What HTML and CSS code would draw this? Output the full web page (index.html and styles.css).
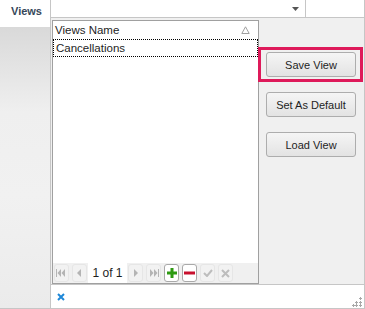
FILE: index.html
```html
<!DOCTYPE html>
<html lang="en">
<head>
  <meta charset="UTF-8">
  <title>Views</title>
  <link rel="stylesheet" href="styles.css">
</head>
<body>
  <div class="frame">
    <!-- Left caption column -->
    <div class="side">
      <div class="side-label">Views</div>
      <div class="side-fill"></div>
    </div>

    <div class="content">
      <!-- Combo row -->
      <div class="top-row">
        <div class="combo">
          <svg class="combo-arrow" width="7" height="4" viewBox="0 0 7 4"><path d="M0 0H7L3.5 4Z" fill="#555"/></svg>
        </div>
        <div class="top-blank"></div>
      </div>

      <!-- Grid and buttons -->
      <div class="main">
        <div class="grid">
          <div class="grid-head">
            <span>Views Name</span>
            <svg class="sort" width="9" height="8" viewBox="0 0 9 8"><path d="M4.5 0.8L8.2 7.5H0.8Z" fill="none" stroke="#a0a0a0"/></svg>
          </div>
          <div class="grid-row focused">Cancellations</div>
          <div class="grid-body"></div>
          <div class="nav">
            <div class="nav-btn">
              <svg width="11" height="8" viewBox="0 0 11 8"><path d="M0.5 0v8" stroke="#b4b4b4"/><path d="M5 0v8L1.5 4Z M9 0v8L5.5 4Z" fill="#b4b4b4"/></svg>
            </div>
            <div class="nav-btn">
              <svg width="5" height="8" viewBox="0 0 5 8"><path d="M4 0v8L0 4Z" fill="#b4b4b4"/></svg>
            </div>
            <div class="nav-page">1 of 1</div>
            <div class="nav-btn">
              <svg width="5" height="8" viewBox="0 0 5 8"><path d="M1 0v8L5 4Z" fill="#b4b4b4"/></svg>
            </div>
            <div class="nav-btn">
              <svg width="11" height="8" viewBox="0 0 11 8"><path d="M2 0v8L5.5 4Z M6 0v8L9.5 4Z" fill="#b4b4b4"/><path d="M10.5 0v8" stroke="#b4b4b4"/></svg>
            </div>
            <div class="nav-btn active">
              <svg width="10" height="10" viewBox="0 0 10 10"><path d="M5 0v10M0 5h10" stroke="#2e9a12" stroke-width="3"/></svg>
            </div>
            <div class="nav-btn active">
              <svg width="11" height="4" viewBox="0 0 11 4"><path d="M0 2h11" stroke="#c8102e" stroke-width="3"/></svg>
            </div>
            <div class="nav-btn">
              <svg width="10" height="8" viewBox="0 0 10 8"><path d="M1 4l3 3 5-6" fill="none" stroke="#bdbdbd" stroke-width="2"/></svg>
            </div>
            <div class="nav-btn">
              <svg width="9" height="9" viewBox="0 0 9 9"><path d="M1 1l7 7M8 1l-7 7" stroke="#bdbdbd" stroke-width="2"/></svg>
            </div>
          </div>
        </div>

        <div class="actions">
          <button class="btn">Save View</button>
          <button class="btn">Set As Default</button>
          <button class="btn">Load View</button>
          <div class="highlight"></div>
        </div>
      </div>

      <!-- Status bar -->
      <div class="status">
        <svg class="status-x" width="8" height="8" viewBox="0 0 8 8"><path d="M1 1l6 6M7 1l-6 6" stroke="#1f88d8" stroke-width="2"/></svg>
        <svg class="grip" width="11" height="11" viewBox="0 0 11 11" fill="#a8a8a8">
          <path d="M8 1h1v3h-1zM7 2h3v1h-3z"/>
          <path d="M4 5h1v3h-1zM3 6h3v1h-3z M8 5h1v3h-1zM7 6h3v1h-3z"/>
          <path d="M0 9h3v1h-3z M1 8h1v3h-1z M4 8h1v3h-1zM3 9h3v1h-3z M8 8h1v3h-1zM7 9h3v1h-3z"/>
        </svg>
      </div>
    </div>
  </div>
</body>
</html>
```

FILE: styles.css
```css
body {
  margin: 0;
  padding: 0;
  font-family: "Liberation Sans", Arial, sans-serif;
  font-size: 11px;
  color: #1e1e1e;
  background-color: #ffffff;
}

.frame {
  display: flex;
  width: 365px;
  height: 309px;
}

/* Left caption column */
.side {
  width: 50px;
  border-right: 1px solid #c6c6c6;
  display: flex;
  flex-direction: column;
}
.side-label {
  height: 27px;
  background-color: #ffffff;
  font-weight: bold;
  color: #36475a;
  text-align: right;
  padding: 5px 8px 0 0;
  box-sizing: border-box;
  font-size: 11px;
}
.side-fill {
  flex: 1;
  background: linear-gradient(#d9d9d9 0%, #efefef 30%, #f1f1f1 60%, #ebebeb 100%);
  border-bottom: 1px solid #c6c6c6;
}

.content {
  width: 313px;
  border-right: 1px solid #c6c6c6;
  display: flex;
  flex-direction: column;
}

/* Combo row */
.top-row {
  display: flex;
  height: 18px;
  border-bottom: 1px solid #c6c6c6;
  box-sizing: border-box;
}
.combo {
  width: 254px;
  border-right: 1px solid #c6c6c6;
  position: relative;
}
.combo-arrow {
  position: absolute;
  right: 6px;
  top: 7px;
}
.top-blank {
  flex: 1;
}

/* Grid area */
.main {
  display: flex;
  height: 266px;
  background-color: #f0f0f0;
  padding: 2px 0 0 1px;
  box-sizing: border-box;
}
.grid {
  width: 207px;
  height: 264px;
  border: 1px solid #a0a0a0;
  box-sizing: border-box;
  background-color: #ffffff;
  display: flex;
  flex-direction: column;
}
.grid-head {
  height: 18px;
  display: flex;
  align-items: center;
  justify-content: space-between;
  padding: 0 8px 0 2px;
  font-size: 11.5px;
}
.grid-row {
  height: 18px;
  line-height: 16px;
  padding-left: 2px;
  font-size: 11.5px;
  box-sizing: border-box;
}
.grid-row.focused {
  border: 1px dotted #000000;
}
.grid-body {
  flex: 1;
}

/* Navigator */
.nav {
  height: 20px;
  background-color: #f0f0f0;
  display: flex;
  align-items: center;
  padding-left: 1px;
}
.nav-btn {
  width: 15px;
  height: 18px;
  margin-right: 3px;
  border: 1px solid #e6e6e6;
  border-radius: 3px;
  background-color: #f2f2f2;
  box-sizing: border-box;
  display: flex;
  align-items: center;
  justify-content: center;
}
.nav-btn.active {
  border-color: #a9a9a9;
  background-color: #ffffff;
}
.nav-page {
  width: 39px;
  height: 20px;
  margin: 0 1px 0 -2px;
  background-color: #ffffff;
  display: flex;
  align-items: center;
  justify-content: center;
  font-size: 12px;
}

/* Buttons */
.actions {
  position: relative;
  flex: 1;
  display: flex;
  flex-direction: column;
  gap: 15px;
  padding: 32px 0 0 7px;
}
.btn {
  width: 90px;
  height: 25px;
  border: 1px solid #adadad;
  border-radius: 3px;
  background: linear-gradient(#f5f5f5, #e3e3e3);
  font-family: "Liberation Sans", Arial, sans-serif;
  font-size: 11px;
  color: #1e1e1e;
  padding: 0;
}
.highlight {
  position: absolute;
  left: -1px;
  top: 27px;
  width: 105px;
  height: 35px;
  border: 3px solid #de1a5a;
  box-sizing: border-box;
}

/* Status bar */
.status {
  height: 25px;
  border-top: 1px solid #c6c6c6;
  border-bottom: 1px solid #c6c6c6;
  box-sizing: border-box;
  position: relative;
}
.status-x {
  position: absolute;
  left: 6px;
  top: 8px;
}
.grip {
  position: absolute;
  right: 1px;
  bottom: 1px;
}
```
